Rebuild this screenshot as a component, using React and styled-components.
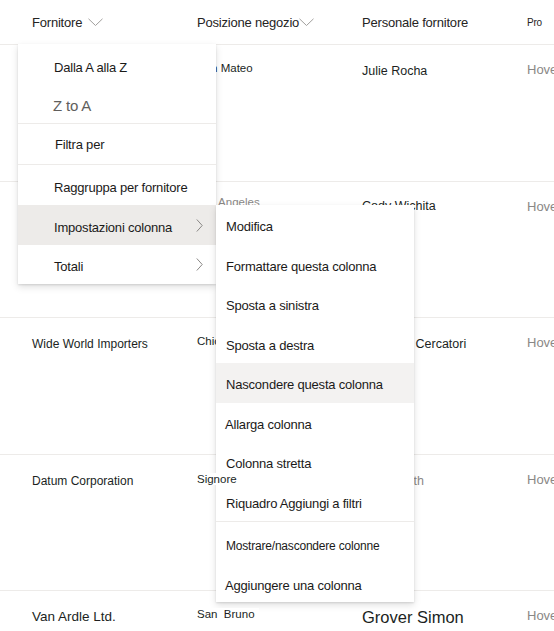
import styled, { createGlobalStyle } from "styled-components";

const GlobalStyle = createGlobalStyle`
  html, body {
    margin: 0;
    padding: 0;
    background: #fff;
  }
  body {
    font-family: "Liberation Sans", Arial, sans-serif;
    color: #323130;
  }
`

const Page = styled.div`
  position: relative;
  width: 554px;
  height: 631px;
  overflow: hidden;
  background: #fff;
`

const HeaderRow = styled.div`
  display: grid;
  grid-template-columns: 165px 165px 165px 1fr;
  padding-left: 32px;
  height: 45px;
  box-sizing: border-box;
  border-bottom: 1px solid #edebe9;
  align-items: center;
`

const HeaderCell = styled.div`
  display: flex;
  align-items: center;
  gap: ${(props) => props.$gap || 0}px;
  font-size: ${(props) => props.$size || 13}px;
  color: #252423;
  white-space: nowrap;
  letter-spacing: -0.2px;
  margin-top: 1px;
`

const Row = styled.div`
  display: grid;
  grid-template-columns: 165px 165px 165px 1fr;
  padding-left: 32px;
  height: 136.5px;
  box-sizing: border-box;
  border-bottom: 1px solid #edebe9;
  align-items: start;
`

const Cell = styled.div`
  font-size: ${(props) => props.$size || 12}px;
  line-height: 16px;
  padding-top: ${(props) => props.$top || 17}px;
  color: ${(props) => props.$muted ? '#8a8886' : '#201f1e'};
  white-space: nowrap;

  span {
    position: ${(props) => props.$raised ? 'relative' : 'static'};
    z-index: ${(props) => props.$raised ? 5 : 'auto'};
    background: ${(props) => props.$raised ? '#fff' : 'transparent'};
    padding-right: ${(props) => props.$raised ? '4px' : '0'};
  }
`

const Menu = styled.div`
  position: absolute;
  left: ${(props) => props.$left}px;
  top: ${(props) => props.$top}px;
  width: 198px;
  background: #fff;
  z-index: 2;
  box-shadow: 0 3.2px 7.2px rgba(0, 0, 0, 0.13), 0 0.6px 1.8px rgba(0, 0, 0, 0.11);
  display: flex;
  flex-direction: column;
`

const Item = styled.div`
  display: flex;
  align-items: center;
  justify-content: space-between;
  height: ${(props) => props.$h || 40}px;
  box-sizing: border-box;
  padding: ${(props) => props.$shift || 0}px 13px 0 ${(props) => props.$indent}px;
  background: ${(props) => props.$active ? props.$active : 'transparent'};
  font-size: ${(props) => props.$size || 13}px;
  color: ${(props) => props.$muted ? '#605e5c' : '#1b1a19'};
  letter-spacing: -0.2px;
  white-space: nowrap;

  svg {
    margin-top: -${(props) => props.$shift || 0}px;
  }
`

const Divider = styled.div`
  height: 1px;
  background: #edebe9;
`

const ChevronDown = () => (
  <svg width="15" height="9" viewBox="0 0 15 9">
    <path d="M0.5 0.8 L7.5 7.5 L14.5 0.8" fill="none" stroke="#a19f9d" strokeWidth="1" />
  </svg>
)

const ChevronRight = () => (
  <svg width="7" height="13" viewBox="0 0 7 13">
    <path d="M0.8 0.5 L6.2 6.5 L0.8 12.5" fill="none" stroke="#8a8886" strokeWidth="1" />
  </svg>
)

const rows = [
  { vendor: '', place: 'San Mateo', staff: 'Julie Rocha' },
  { vendor: '', place: 'Los Angeles', staff: 'Cody Wichita', placeMuted: true, placeTop: 12, staffTop: 16 },
  { vendor: 'Wide World Importers', place: 'Chicago', staff: 'Gabriella Cercatori' },
  { vendor: 'Datum Corporation', place: 'Signore', staff: 'Lidia Smith', raised: true, placeTop: 16, staffMuted: true },
  { vendor: 'Van Ardle Ltd.', vendorSize: 13.5, place: 'San\u00a0 Bruno', staff: 'Grover Simon', staffSize: 16.5, raised: true },
]

const App = () => {
  return (
    <>
      <GlobalStyle />
      <Page>
        <HeaderRow>
          <HeaderCell $gap={6}>Fornitore <ChevronDown /></HeaderCell>
          <HeaderCell>Posizione negozio<ChevronDown /></HeaderCell>
          <HeaderCell>Personale fornitore</HeaderCell>
          <HeaderCell $size={10}>Pro</HeaderCell>
        </HeaderRow>

        {rows.map((row, i) => (
          <Row key={i}>
            <Cell $size={row.vendorSize || 12} $top={18}>{row.vendor}</Cell>
            <Cell $size={11.5} $top={row.placeTop || 15} $muted={row.placeMuted} $raised={row.raised}>
              <span>{row.place}</span>
            </Cell>
            <Cell $size={row.staffSize || 12.5} $top={row.staffTop || 18} $muted={row.staffMuted}>{row.staff}</Cell>
            <Cell $size={13} $top={17} $muted>Hoverfield</Cell>
          </Row>
        ))}

        <Menu $left={18} $top={44}>
          <Item $indent={36} $h={43} $shift={4}>Dalla A alla Z</Item>
          <Item $indent={35} $h={36} $size={15} $muted>Z to A</Item>
          <Divider />
          <Item $indent={37}>Filtra per</Item>
          <Divider />
          <Item $indent={36} $shift={4}>Raggruppa per fornitore</Item>
          <Item $indent={36} $shift={4} $active="#edebe9">Impostazioni colonna <ChevronRight /></Item>
          <Item $indent={36} $h={39} $shift={4}>Totali <ChevronRight /></Item>
        </Menu>

        <Menu $left={216} $top={205}>
          <Item $indent={10} $h={39.5} $shift={4}>Modifica</Item>
          <Item $indent={10} $h={39.5} $shift={4}>Formattare questa colonna</Item>
          <Item $indent={10} $h={39.5} $shift={4}>Sposta a sinistra</Item>
          <Item $indent={10} $h={39.5} $shift={4}>Sposta a destra</Item>
          <Item $indent={10} $h={39.5} $shift={4} $active="#f3f2f1">Nascondere questa colonna</Item>
          <Item $indent={9} $h={39.5} $shift={4}>Allarga colonna</Item>
          <Item $indent={10} $h={39.5} $shift={4}>Colonna stretta</Item>
          <Item $indent={10} $h={39.5} $shift={4}>Riquadro Aggiungi a filtri</Item>
          <Divider />
          <Item $indent={10} $size={12} $shift={8}>Mostrare/nascondere colonne</Item>
          <Item $indent={9} $shift={6}>Aggiungere una colonna</Item>
        </Menu>
      </Page>
    </>
  )
}

export default App
